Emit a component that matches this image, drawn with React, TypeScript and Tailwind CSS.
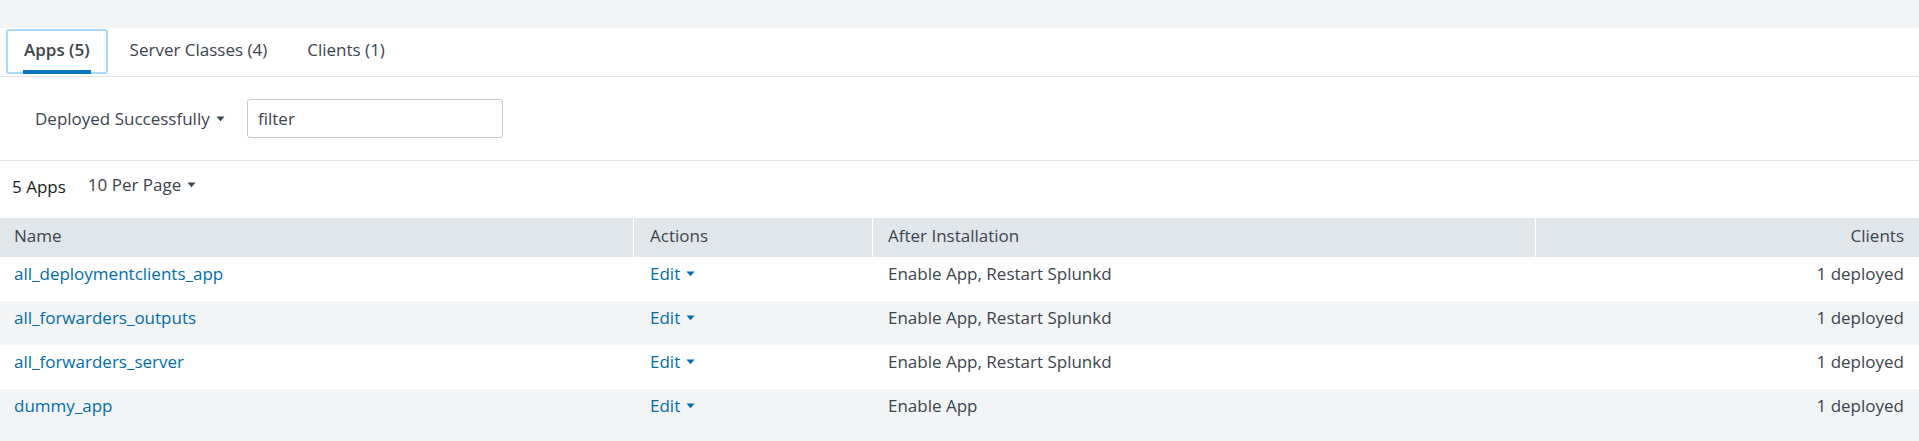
import React from "react";

const Caret = ({ className = "" }: { className?: string }) => (
  <svg width="9" height="6" viewBox="0 0 9 6" className={className}>
    <path d="M0.5 0.5 L8.5 0.5 L4.5 5.2 Z" fill="currentColor" />
  </svg>
);

const rows = [
  { name: "all_deploymentclients_app", after: "Enable App, Restart Splunkd", clients: "1 deployed" },
  { name: "all_forwarders_outputs", after: "Enable App, Restart Splunkd", clients: "1 deployed" },
  { name: "all_forwarders_server", after: "Enable App, Restart Splunkd", clients: "1 deployed" },
  { name: "dummy_app", after: "Enable App", clients: "1 deployed" },
];

export default function App() {
  return (
    <div
      className="w-[1919px] h-[441px] bg-[#f2f4f5] text-[#3c444d] text-[17px] overflow-hidden"
      style={{ fontFamily: '"Open Sans", "Liberation Sans", sans-serif' }}
    >
      <div className="h-[28px] bg-[#f2f4f5]" />
      <div className="bg-white">
        {/* Tabs */}
        <div className="flex h-[49px] pl-[4px] border-b border-[#e1e6eb]">
          <div className="relative flex items-center px-[20px] h-[48px] pb-[5px] font-semibold text-[#3c444d]">
            <div className="absolute left-[2px] right-[2px] top-[1px] bottom-[2px] border-2 border-[#a8daff] rounded-[3px]" />
            <span className="relative">Apps (5)</span>
            <div className="absolute left-[19px] right-[19px] bottom-[2px] h-[4px] bg-[#0877c0]" />
          </div>
          <div className="flex items-center px-[20px] h-[48px] pb-[5px] text-[#3c444d]">Server Classes (4)</div>
          <div className="flex items-center px-[20px] h-[48px] pb-[5px] text-[#3c444d]">Clients (1)</div>
        </div>
        {/* Filter row */}
        <div className="flex items-center h-[84px] border-b border-[#e1e6eb]">
          <div className="flex items-center gap-[6px] pl-[35px] w-[247px]">
            <span>Deployed Successfully</span>
            <Caret className="text-[#3c444d]" />
          </div>
          <div className="w-[256px] h-[39px] border border-[#c3cbd4] rounded-[3px] flex items-center px-[10px] text-[#3c444d]">
            filter
          </div>
        </div>
        {/* Count row */}
        <div className="flex items-center h-[57px] pl-[12px] pb-[6px]">
          <span className="text-[#171d21]">5 Apps</span>
          <span className="ml-[22px] flex items-center gap-[6px] -mt-[4px]">
            10 Per Page
            <Caret />
          </span>
        </div>
      </div>
      {/* Table */}
      <div className="grid grid-cols-[633px_239px_663px_384px]">
        <div className="h-[39px] bg-[#e1e6eb] flex items-center pl-[14px] pb-[4px]">Name</div>
        <div className="h-[39px] bg-[#e1e6eb] flex items-center pl-[16px] pb-[4px] border-l border-white">Actions</div>
        <div className="h-[39px] bg-[#e1e6eb] flex items-center pl-[15px] pb-[4px] border-l border-white">After Installation</div>
        <div className="h-[39px] bg-[#e1e6eb] flex items-center justify-end pr-[15px] pb-[4px] border-l border-white">Clients</div>
        {rows.map((r, i) => {
          const bg = i % 2 === 0 ? "bg-white" : "bg-[#f2f4f5]";
          return (
            <React.Fragment key={r.name}>
              <div className={`h-[44px] flex items-center pl-[14px] pb-[10px] text-[#006eaa] ${bg}`}>{r.name}</div>
              <div className={`h-[44px] flex items-center pl-[17px] pb-[10px] text-[#006eaa] gap-[6px] ${bg}`}>
                Edit
                <Caret />
              </div>
              <div className={`h-[44px] flex items-center pl-[16px] pb-[10px] ${bg}`}>{r.after}</div>
              <div className={`h-[44px] flex items-center justify-end pr-[15px] pb-[10px] ${bg}`}>{r.clients}</div>
            </React.Fragment>
          );
        })}
      </div>
    </div>
  );
}
